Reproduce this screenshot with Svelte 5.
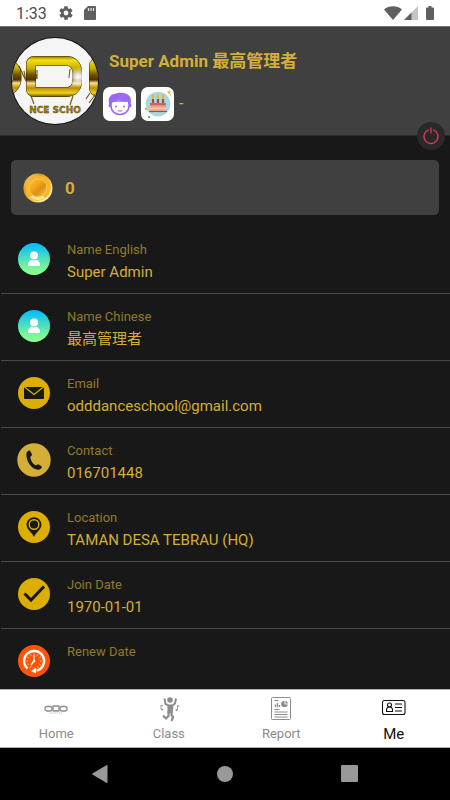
<script lang="ts">
  let activeTab = 'Me';
  const coins = 0;

  const tabs = ['Home', 'Class', 'Report', 'Me'];

  const fields = [
    { label: 'Name English', value: 'Super Admin', icon: 'person' },
    { label: 'Name Chinese', value: '最高管理者', icon: 'person' },
    { label: 'Email', value: 'odddanceschool@gmail.com', icon: 'mail' },
    { label: 'Contact', value: '016701448', icon: 'phone' },
    { label: 'Location', value: 'TAMAN DESA TEBRAU (HQ)', icon: 'pin' },
    { label: 'Join Date', value: '1970-01-01', icon: 'check' },
    { label: 'Renew Date', value: '', icon: 'clock' }
  ];

  // minute marks on the renew clock
  const ticks = Array.from({ length: 12 }, (_, i) => i * 30);
</script>

<div class="screen">
  <div class="status">
    <span class="time">1:33</span>
    <svg class="gear" width="16" height="16" viewBox="0 0 24 24" fill="#5f5f5f">
      <path d="M19.4 13a7.8 7.8 0 0 0 0-2l2.1-1.7a.5.5 0 0 0 .1-.6l-2-3.5a.5.5 0 0 0-.6-.2l-2.5 1a7.3 7.3 0 0 0-1.7-1l-.4-2.6a.5.5 0 0 0-.5-.4h-4a.5.5 0 0 0-.5.4L9 5a7.3 7.3 0 0 0-1.7 1l-2.5-1a.5.5 0 0 0-.6.2l-2 3.5a.5.5 0 0 0 .1.6L4.5 11a7.8 7.8 0 0 0 0 2l-2.1 1.7a.5.5 0 0 0-.1.6l2 3.5c.1.2.4.3.6.2l2.5-1c.5.4 1.1.7 1.7 1l.4 2.6c0 .2.2.4.5.4h4c.3 0 .5-.2.5-.4L15 19a7.3 7.3 0 0 0 1.7-1l2.5 1c.2.1.5 0 .6-.2l2-3.5a.5.5 0 0 0-.1-.6zM12 15.600a3.600 3.600 0 1 1 0-7.200 3.600 3.600 0 0 1 0 7.200z" />
    </svg>
    <svg width="12" height="14" viewBox="0 0 12 14">
      <path d="M4 0h7a1 1 0 0 1 1 1v12a1 1 0 0 1-1 1H1a1 1 0 0 1-1-1V4z" fill="#5f5f5f" />
      <path d="M4.5 2v3M7 2v3M9.5 2v3" stroke="#e4e4e4" stroke-width="1.2" />
    </svg>
    <div class="signals">
      <svg width="18" height="14" viewBox="0 0 18 14">
        <path d="M0 3.5C5-.8 13-.8 18 3.5L9 14z" fill="#5f5f5f" />
      </svg>
      <svg width="14" height="14" viewBox="0 0 14 14">
        <path d="M14 0v14H0z" fill="#c4c4c4" />
        <path d="M7.5 6.5V14H0z" fill="#5f5f5f" />
      </svg>
      <svg class="battery" width="8" height="14" viewBox="0 0 8 14">
        <path d="M2.5 0h3v1.5H7a1 1 0 0 1 1 1V13a1 1 0 0 1-1 1H1a1 1 0 0 1-1-1V2.5a1 1 0 0 1 1-1h1.5z" fill="#5f5f5f" />
      </svg>
    </div>
  </div>

  <header>
    <svg class="avatar" width="88" height="88" viewBox="0 0 88 88">
      <defs>
        <linearGradient id="gold" x1="0" y1="19" x2="0" y2="60" gradientUnits="userSpaceOnUse">
          <stop offset="0" stop-color="#8c7400" />
          <stop offset=".1" stop-color="#f4e010" />
          <stop offset=".3" stop-color="#c9ae00" />
          <stop offset=".46" stop-color="#705000" />
          <stop offset=".58" stop-color="#4d3300" />
          <stop offset=".66" stop-color="#ffe08a" />
          <stop offset=".78" stop-color="#b98c0a" />
          <stop offset=".9" stop-color="#ecd412" />
          <stop offset="1" stop-color="#6b4a00" />
        </linearGradient>
        <radialGradient id="flare">
          <stop offset="0" stop-color="#fff" />
          <stop offset=".35" stop-color="#fff" stop-opacity=".8" />
          <stop offset="1" stop-color="#fff" stop-opacity="0" />
        </radialGradient>
        <clipPath id="disc"><circle cx="44" cy="44" r="43" /></clipPath>
        <clipPath id="left"><rect x="0" y="0" width="42" height="88" /></clipPath>
        <clipPath id="right"><rect x="42" y="0" width="46" height="88" /></clipPath>
      </defs>
      <circle cx="44" cy="44" r="44" fill="#151515" />
      <circle cx="44" cy="44" r="43" fill="#f5f5f5" />
      <g clip-path="url(#disc)" fill="none">
        <path d="M8 29l7 15-2-10M26 33v9l-2-6M59 32l-1 9M20 59l3 8M62 59l-3 9M75 62l4-6M78 66l6-8" stroke="#7a5a12" stroke-width="1.2" />
        <rect x="-25" y="26" width="31" height="28" rx="12" stroke="#3a2a00" stroke-width="9" />
        <rect x="-25" y="26" width="31" height="28" rx="12" stroke="url(#gold)" stroke-width="8" />
        <rect x="83" y="25" width="40" height="30" rx="4" stroke="#3a2a00" stroke-width="10" />
        <rect x="83" y="25" width="40" height="30" rx="4" stroke="url(#gold)" stroke-width="9" />
        <g clip-path="url(#left)">
          <rect x="20" y="24" width="46" height="31" rx="3" stroke="#3a2a00" stroke-width="10" />
          <rect x="20" y="24" width="46" height="31" rx="3" stroke="url(#gold)" stroke-width="9" />
        </g>
        <g clip-path="url(#right)">
          <rect x="20" y="24" width="46" height="31" rx="10" stroke="#3a2a00" stroke-width="10" />
          <rect x="20" y="24" width="46" height="31" rx="10" stroke="url(#gold)" stroke-width="9" />
        </g>
        <circle cx="67" cy="40" r="10" fill="url(#flare)" />
        <text x="44" y="76" text-anchor="middle" class="logo-text">NCE SCHO</text>
      </g>
    </svg>

    <div class="who">
      <h1>Super Admin 最高管理者</h1>
      <div class="badges">
        <span class="tile">
          <svg width="26" height="26" viewBox="0 0 26 26">
            <circle cx="3.500" cy="14.500" r="2" fill="#9b6af0" />
            <circle cx="22.500" cy="14.500" r="2" fill="#9b6af0" />
            <path d="M4 10h18v5c0 5-4 8.500-9 8.500S4 20 4 15z" fill="#fff" stroke="#9b6af0" stroke-width="1.600" />
            <path d="M2.500 14C0 7 4 2.500 8 3c4-2.500 14-1.500 15.500 4 .7 2.500.5 5 0 7H22l-1.500-3.500c-4.500.5-7.500-.5-9.500-2-1.500 2-3 2.500-5 2.500L4 14z" fill="#9b6af0" />
            <circle cx="9" cy="15.500" r="1" fill="#9b6af0" />
            <circle cx="17" cy="15.500" r="1" fill="#9b6af0" />
            <path d="M10.500 19.500q2.500 1.500 5 0" fill="none" stroke="#9b6af0" />
          </svg>
        </span>
        <span class="tile">
          <svg width="28" height="28" viewBox="0 0 28 28">
            <circle cx="14" cy="14" r="12.300" fill="#a8d9da" />
            <path d="M9 9v5M14 9v5M19 9v5" stroke="#9f4a4d" stroke-width="2.200" />
            <path d="M9 5v3M14 5v3M19 5v3" stroke="#efb42e" stroke-width="2" stroke-linecap="round" />
            <rect x="6" y="13" width="16" height="8" rx="1" fill="#f4a58a" />
            <path d="M6 13h16v2q-1.500 1.500-3 0-1.500 1.500-3 0-1.500 1.500-3 0-1.500 1.500-3 0-2 1.500-4 0z" fill="#d0606a" />
            <path d="M6 18.500h16" stroke="#f7d5a9" />
            <path d="M5 21.500h18" stroke="#78605e" stroke-width="1.200" />
            <path d="M25 0l.6 1.400 1.400.2-1 1 .2 1.500-1.200-.8-1.200.8.2-1.500-1-1 1.400-.2z" fill="#f2ab27" />
            <circle cx="2" cy="19" r="1.200" fill="#f2ab27" />
            <circle cx="5" cy="27" r=".9" fill="#178c8c" />
            <circle cx="26.500" cy="5" r=".7" fill="#f2ab27" />
          </svg>
        </span>
        <span class="age">-</span>
      </div>
    </div>

    <button class="power" aria-label="Log out">
      <svg width="18" height="18" viewBox="0 0 18 18" fill="none" stroke="#d93a54" stroke-width="1.300">
        <path d="M6.800 2.900a7 7 0 1 0 4.400 0M9 .5v6" />
      </svg>
    </button>
  </header>

  <main>
    <div class="coins">
      <svg width="30" height="30" viewBox="0 0 30 30">
        <defs>
          <linearGradient id="coin" x1="0" y1="0" x2="1" y2="1">
            <stop offset="0" stop-color="#ffc535" />
            <stop offset=".4" stop-color="#f0a51c" />
            <stop offset=".6" stop-color="#dc9010" />
            <stop offset="1" stop-color="#ffcf4a" />
          </linearGradient>
          <linearGradient id="rim" x1="0" y1="0" x2="1" y2="1">
            <stop offset="0" stop-color="#ffe9a8" />
            <stop offset=".3" stop-color="#e49a1c" />
            <stop offset=".6" stop-color="#ffc23a" />
            <stop offset=".85" stop-color="#fff0b8" />
            <stop offset="1" stop-color="#e8a82c" />
          </linearGradient>
        </defs>
        <circle cx="15" cy="15" r="14.500" fill="url(#rim)" />
        <circle cx="15" cy="15" r="12.500" fill="#f8b42a" />
        <path d="M7 24a12.500 12.500 0 0 0 15 1l-3-3a9 9 0 0 1-9 0z" fill="#ffe69c" />
        <circle cx="15" cy="15" r="9" fill="url(#coin)" stroke="#ffd870" stroke-width=".6" />
      </svg>
      <strong>{coins}</strong>
    </div>

    <dl>
      {#each fields as field}
        <div class="row">
          <svg class="icon" width="34" height="34" viewBox="0 0 34 34">
            {#if field.icon === 'person'}
              <defs>
                <linearGradient id="sky" x1="0" y1="0" x2="0" y2="1">
                  <stop offset="0" stop-color="#00b8ff" />
                  <stop offset=".75" stop-color="#77f59b" />
                  <stop offset="1" stop-color="#8dff8d" />
                </linearGradient>
              </defs>
              <circle cx="17" cy="17" r="16" fill="url(#sky)" />
              <circle cx="17" cy="13.500" r="4" fill="#fff" />
              <path d="M11 24v-1.500c0-3 2.500-4.500 4-4.500 1 .8 3 .8 4 0 1.500 0 4 1.500 4 4.500V24z" fill="#fff" />
            {:else if field.icon === 'mail'}
              <circle cx="17" cy="17" r="16" fill="#dcae00" />
              <rect x="7" y="11" width="20" height="12" rx="1" fill="#181818" />
              <path d="M7.500 11l9.500 7.500 9.500-7.500" fill="none" stroke="#dcae00" stroke-width="1.300" />
            {:else if field.icon === 'phone'}
              <circle cx="17" cy="17" r="16.700" fill="#d4af37" />
              <path d="M9.500 10c.3-1.700 2-2.700 3.500-2.500l2 4c.2 1.200-1.500 1.500-1.700 2.700.3 3 2.200 6.300 5 8 1.200.3 2-1.200 3-1l3.500 2.200c.5 1.300-1.300 3-3 3.300C15.500 27.500 8.300 18 9.500 10z" fill="#181818" />
            {:else if field.icon === 'pin'}
              <circle cx="17" cy="17" r="16" fill="#dcae00" />
              <path d="M17 27c-1.500-4-7.500-8-7.500-12.300a7.500 7.500 0 0 1 15 0C24.500 19 18.500 23 17 27z" fill="#181818" />
              <circle cx="17" cy="14.500" r="4.800" fill="none" stroke="#dcae00" stroke-width="1.400" />
            {:else if field.icon === 'check'}
              <circle cx="17" cy="17" r="16" fill="#dcae00" />
              <path d="M7.500 16.500l6.500 6.500 13-13.500" fill="none" stroke="#181818" stroke-width="3" />
            {:else}
              <circle cx="17" cy="17" r="16" fill="#ff5408" />
              <path d="M10.500 24.500a10 10 0 1 1 9 2.200" fill="none" stroke="#fff" stroke-width="2.400" />
              <path d="M14 27l5-3.500v6z" fill="#fff" />
              {#each ticks as angle}
                <path d="M17 9.500v1.200" stroke="#fff" stroke-width=".8" transform="rotate({angle} 17 17)" />
              {/each}
              <path d="M17 11v6l-3 4" fill="none" stroke="#fff" stroke-width="1.300" />
              <circle cx="17" cy="17" r="1.300" fill="#fff" />
            {/if}
          </svg>
          <div class="text">
            <dt>{field.label}</dt>
            <dd>{field.value}</dd>
          </div>
        </div>
      {/each}
    </dl>
  </main>

  <nav class="tabs">
    {#each tabs as tab}
      <button class:active={activeTab === tab} on:click={() => (activeTab = tab)}>
        <svg width="26" height="26" viewBox="0 0 26 26" fill="none" stroke="#8c8c8c">
          {#if tab === 'Home'}
            <rect x="2" y="10.500" width="7" height="4.500" rx="2" stroke-width="1.300" />
            <rect x="10" y="10" width="6" height="5" rx=".5" stroke-width="1.300" />
            <rect x="17" y="10.500" width="7" height="4.500" rx="2" stroke-width="1.300" />
            <path d="M7 17h12" stroke="#bbb" stroke-dasharray="1.500 .7" stroke-width=".8" />
          {:else if tab === 'Class'}
            <circle cx="14" cy="4" r="2.800" fill="#8c8c8c" stroke="none" />
            <path d="M8.500 2.500l1 5.500 3 1.500h4l2.500-2 1-5" stroke-width="2" />
            <path d="M11.500 9h6l-1 8h-5z" fill="#8c8c8c" stroke="none" />
            <path d="M12.500 15v5l-2.500 2.500-3-3M15.500 15v4l1.500 2-1.500 4" stroke-width="2.200" />
            <path d="M5 9v4M5 9l2 1M21.500 9.500v4M21.500 9.500l2 1" stroke-width=".9" />
            <circle cx="6" cy="13.500" r="1" fill="#8c8c8c" stroke="none" />
            <circle cx="20.500" cy="14" r="1" fill="#8c8c8c" stroke="none" />
          {:else if tab === 'Report'}
            <rect x="3.500" y="1.500" width="19" height="22" rx="1" />
            <path d="M6.500 4.500h4M6.500 13.500h5M6.500 16h13M6.500 18.500h13M6.500 21h13" />
            <path d="M7.500 11V8.500M9.500 11V7M11.500 11V9" stroke-width="1.300" />
            <circle cx="16.500" cy="8" r="3.300" fill="#8c8c8c" stroke="none" />
            <path d="M17 4v4h4" stroke="#fff" stroke-width=".9" />
          {:else}
            <g stroke="#111" stroke-width="1.100">
              <rect x="1.500" y="4.500" width="22.500" height="14" rx="2" />
              <circle cx="8.500" cy="9" r="2" />
              <path d="M5.500 15.500V14c0-4 6-4 6 0v1.500zM14 8h7M14 11.500h7M14 15h7" />
            </g>
          {/if}
        </svg>
        <span>{tab}</span>
      </button>
    {/each}
  </nav>

  <div class="system">
    <button aria-label="Back">
      <svg width="18" height="18" viewBox="0 0 18 18"><path d="M16.500.5v17a.5.5 0 0 1-.8.4L1.500 9.500a.6.6 0 0 1 0-1L15.700.1a.5.5 0 0 1 .8.4z" fill="#999" /></svg>
    </button>
    <button aria-label="Home screen">
      <svg width="18" height="18" viewBox="0 0 18 18"><circle cx="9" cy="9" r="8" fill="#999" /></svg>
    </button>
    <button aria-label="Recent apps">
      <svg width="18" height="18" viewBox="0 0 18 18"><rect x="0" y="0" width="17" height="17" rx="1" fill="#999" /></svg>
    </button>
  </div>
</div>

<style>
  :global(body) {
    background: #181818;
  }

  .screen {
    display: flex;
    flex-direction: column;
    height: 100vh;
    background: #181818;
    color: #d4af37;
    font-family: Roboto, "Noto Sans CJK SC", sans-serif;
  }

  svg {
    display: block;
    flex: none;
  }

  button {
    padding: 0;
    border: none;
    background: none;
    font: inherit;
    cursor: pointer;
  }

  .status {
    display: flex;
    align-items: center;
    height: 26px;
    padding: 0 16px;
    background: #fff;
    color: #4c4c4c;
  }

  .time {
    font-size: 16px;
  }

  .gear {
    margin: 0 10px 0 11px;
  }

  .signals {
    display: flex;
    gap: 2px;
    margin-left: auto;
  }

  .battery {
    margin-left: 6px;
  }

  header {
    position: relative;
    display: flex;
    align-items: center;
    gap: 4px;
    box-sizing: border-box;
    height: 110px;
    padding: 0 11px;
    background: #404040;
    border-top: 1px solid #707070;
    border-bottom: 1px solid #2c2c2c;
  }

  .logo-text {
    fill: #a58200;
    stroke: #2b2000;
    stroke-width: 0.3px;
    font: bold 9px "DejaVu Sans", sans-serif;
  }

  .who {
    padding-top: 7px;
  }

  h1 {
    margin: 0 6px 14px;
    font-size: 17px;
    line-height: 24px;
  }

  .badges {
    display: flex;
    align-items: center;
    gap: 5px;
  }

  .tile {
    display: grid;
    place-items: center;
    width: 33px;
    height: 34px;
    background: #fff;
    border-radius: 7px;
  }

  .age {
    font-size: 16px;
  }

  .power {
    position: absolute;
    right: 5px;
    bottom: -15px;
    display: grid;
    place-items: center;
    width: 28px;
    height: 28px;
    border-radius: 50%;
    background: #292929;
  }

  main {
    flex: 1;
    min-height: 0;
    overflow-y: auto;
    scrollbar-width: none;
  }

  .coins {
    display: flex;
    align-items: center;
    gap: 12px;
    box-sizing: border-box;
    height: 55px;
    margin: 24px 11px 12px;
    padding: 0 12px;
    background: #404040;
    border-radius: 5px;
    font-size: 17px;
  }

  dl {
    margin: 0;
  }

  .row {
    display: flex;
    gap: 16px;
    box-sizing: border-box;
    height: 67px;
    margin-left: 1px;
    padding: 12px 16px 10px;
    border-bottom: 1px solid #484848;
  }

  .icon {
    margin-top: 3px;
  }

  dt {
    color: #917a2b;
    font-size: 13px;
    line-height: 22px;
  }

  dd {
    margin: 0;
    font-size: 15px;
    line-height: 22px;
  }

  .tabs {
    display: grid;
    grid-template-columns: repeat(4, 1fr);
    box-sizing: border-box;
    height: 59px;
    background: #fff;
    border-top: 1px solid #b0b0b0;
    border-bottom: 1px solid #b0b0b0;
  }

  .tabs button {
    display: flex;
    flex-direction: column;
    align-items: center;
    gap: 2px;
    padding-top: 6px;
    color: #8c8c8c;
    font-size: 13px;
    line-height: 20px;
  }

  .tabs .active {
    color: #111;
    font-size: 15px;
  }

  .system {
    display: flex;
    align-items: center;
    justify-content: center;
    gap: 107px;
    height: 52px;
    background: #000;
  }
</style>
